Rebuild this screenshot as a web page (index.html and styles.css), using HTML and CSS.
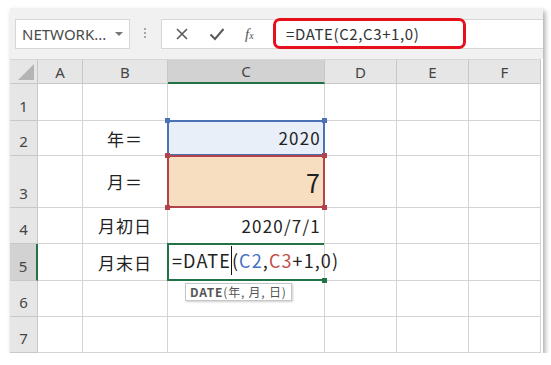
FILE: index.html
```html
<!DOCTYPE html>
<html lang="ja">
<head>
    <meta charset="UTF-8">
    <title>DATE</title>
    <link rel="stylesheet" href="styles.css">
</head>
<body>
<div class="window">
    <div class="toolbar">
        <div class="namebox">
            <span>NETWORK...</span>
            <span class="caret"></span>
        </div>
        <div class="grip"></div>
        <div class="fbar">
            <div class="fbtns">
                <svg width="14" height="14" viewBox="0 0 14 14"><path d="M2 2 L12 12 M12 2 L2 12" stroke="#5a5a5a" stroke-width="1.6" fill="none"/></svg>
                <svg width="16" height="14" viewBox="0 0 16 14"><path d="M1.5 7.5 L6 12 L14.5 2" stroke="#5a5a5a" stroke-width="2" fill="none"/></svg>
                <span class="fx">f<small>x</small></span>
            </div>
            <div class="finput">
                <div class="fhl">=DATE(C2,C3+1,0)</div>
            </div>
        </div>
    </div>

    <div class="sheet">
        <!-- header row -->
        <div class="hd corner"><span class="tri"></span></div>
        <div class="hd">A</div>
        <div class="hd">B</div>
        <div class="hd sel-col">C</div>
        <div class="hd">D</div>
        <div class="hd">E</div>
        <div class="hd">F</div>

        <!-- row 1 -->
        <div class="rh">1</div>
        <div class="c"></div><div class="c"></div><div class="c"></div>
        <div class="c"></div><div class="c"></div><div class="c"></div>

        <!-- row 2 -->
        <div class="rh">2</div>
        <div class="c"></div>
        <div class="c lbl">年＝</div>
        <div class="c num ref-blue">2020<i class="h tl"></i><i class="h tr"></i></div>
        <div class="c"></div><div class="c"></div><div class="c"></div>

        <!-- row 3 -->
        <div class="rh">3</div>
        <div class="c"></div>
        <div class="c lbl">月＝</div>
        <div class="c num big ref-red">7<i class="h tl"></i><i class="h tr"></i><i class="h bl"></i><i class="h br"></i></div>
        <div class="c"></div><div class="c"></div><div class="c"></div>

        <!-- row 4 -->
        <div class="rh">4</div>
        <div class="c"></div>
        <div class="c lbl">月初日</div>
        <div class="c num">2020/7/1</div>
        <div class="c"></div><div class="c"></div><div class="c"></div>

        <!-- row 5 -->
        <div class="rh sel-row">5</div>
        <div class="c"></div>
        <div class="c lbl">月末日</div>
        <div class="c edit">
            <span class="ftext">=DATE<span class="cursor"></span>(<span class="r-blue">C2</span>,<span class="r-red">C3</span>+1,0)</span>
            <i class="fill"></i>
            <div class="tip"><b>DATE</b>(年, 月, 日)</div>
        </div>
        <div class="c"></div><div class="c"></div><div class="c"></div>

        <!-- row 6 -->
        <div class="rh">6</div>
        <div class="c"></div><div class="c"></div><div class="c"></div>
        <div class="c"></div><div class="c"></div><div class="c"></div>

        <!-- row 7 -->
        <div class="rh">7</div>
        <div class="c"></div><div class="c"></div><div class="c"></div>
        <div class="c"></div><div class="c"></div><div class="c"></div>
    </div>
</div>
</body>
</html>
```

FILE: styles.css
```css
body {
    margin: 0;
    background: #fff;
    font-family: "Noto Sans CJK JP", "Noto Sans", sans-serif;
    color: #222;
}
.window {
    margin: 8px 0 0 10px;
    width: 533px;
    height: 345px;
    background: #fff;
    box-shadow: 2px 3px 5px rgba(0, 0, 0, 0.35);
    overflow: hidden;
}

/* toolbar */
.toolbar {
    height: 51px;
    background: #f1f1f1;
    display: flex;
    align-items: flex-start;
    padding: 11px 0 0 5px;
    box-sizing: border-box;
}
.namebox {
    width: 115px;
    height: 30px;
    box-sizing: border-box;
    background: #fff;
    border: 1px solid #d6d6d6;
    display: flex;
    align-items: center;
    justify-content: space-between;
    padding: 0 6px 0 6px;
    font-family: "Noto Sans", sans-serif;
    font-size: 15px;
    color: #4a4a4a;
}
.caret {
    width: 0;
    height: 0;
    border-left: 4px solid transparent;
    border-right: 4px solid transparent;
    border-top: 4px solid #777;
}
.grip {
    width: 2px;
    height: 12px;
    margin: 9px 15px 0 14px;
    background: repeating-linear-gradient(#a8a8a8 0 2px, transparent 2px 4px);
}
.fbar {
    flex: 1;
    display: flex;
    height: 30px;
    box-sizing: border-box;
    background: #fff;
    border: 1px solid #d6d6d6;
    border-right: none;
}
.fbtns {
    width: 108px;
    display: flex;
    align-items: center;
    gap: 20px;
    padding-left: 13px;
    box-sizing: border-box;
}
.fx {
    font-family: "Liberation Serif", serif;
    font-style: italic;
    font-size: 15px;
    color: #555;
}
.fx small {
    font-size: 10px;
}
.finput {
    flex: 1;
    position: relative;
}
.fhl {
    position: absolute;
    left: 3px;
    top: -2px;
    width: 193px;
    height: 31px;
    box-sizing: border-box;
    border: 3px solid #e5101b;
    border-radius: 7px;
    padding-left: 10px;
    font-size: 15px;
    letter-spacing: 0.6px;
    line-height: 25px;
    color: #333;
}

/* sheet */
.sheet {
    display: grid;
    grid-template-columns: 28px 45px 85px 157px 72px 72px 72px;
    grid-template-rows: 25px 37px 35px 52px 36px 37px 36px 36px;
    font-size: 17px;
}
.hd, .rh {
    background: #e6e6e6;
    color: #444;
    font-family: "Noto Sans", sans-serif;
    font-size: 15px;
    border-right: 1px solid #c8c8c8;
    border-bottom: 1px solid #c8c8c8;
    box-sizing: border-box;
    display: flex;
    justify-content: center;
}
.hd {
    align-items: center;
    border-top: 1px solid #d8d8d8;
}
.rh {
    align-items: flex-end;
    padding-bottom: 4px;
}
.corner {
    position: relative;
}
.tri {
    position: absolute;
    right: 3px;
    bottom: 3px;
    width: 0;
    height: 0;
    border-left: 16px solid transparent;
    border-bottom: 16px solid #b4b4b4;
}
.sel-col {
    background: #d2d2d2;
    border-bottom: 2px solid #217346;
}
.sel-row {
    background: #d2d2d2;
    border-right: 2px solid #217346;
}
.c {
    border-right: 1px solid #d4d4d4;
    border-bottom: 1px solid #d4d4d4;
    box-sizing: border-box;
    position: relative;
    display: flex;
    align-items: flex-end;
    padding: 0 4px 5px;
    white-space: nowrap;
}
.lbl {
    justify-content: center;
    align-items: center;
    padding-bottom: 0;
    letter-spacing: 1px;
}
.num {
    justify-content: flex-end;
    letter-spacing: 1.2px;
    padding-right: 3px;
}
.big {
    font-size: 25px;
    padding-bottom: 7px;
}
.ref-blue {
    background: #e9eff9;
}
.ref-red {
    background: #f8dec0;
}
.ref-blue::after, .ref-red::after, .edit::after {
    content: "";
    position: absolute;
    left: -1px;
    top: -1px;
    right: -1px;
    bottom: -1px;
    border: 2px solid #4a72b4;
    pointer-events: none;
}
.ref-red::after {
    border-color: #b2424b;
}
.edit::after {
    border-color: #217346;
    border-right: none;
    right: 0;
}
.h {
    position: absolute;
    width: 5px;
    height: 5px;
    background: #4a72b4;
    z-index: 2;
}
.ref-red .h {
    background: #b2424b;
}
.tl { left: -3px; top: -3px; }
.tr { right: -3px; top: -3px; }
.bl { left: -3px; bottom: -3px; }
.br { right: -3px; bottom: -3px; }

/* edited cell */
.edit {
    overflow: visible;
    z-index: 3;
    padding-left: 4px;
    background: #fff;
}
.ftext {
    font-size: 18px;
    letter-spacing: 1.1px;
    color: #222;
}
.r-blue { color: #4a72c4; }
.r-red { color: #c0504d; }
.cursor {
    display: inline-block;
    width: 1px;
    height: 29px;
    background: #111;
    vertical-align: -7px;
}
.fill {
    position: absolute;
    right: -3px;
    bottom: -3px;
    width: 5px;
    height: 5px;
    background: #217346;
    z-index: 2;
}
.tip {
    position: absolute;
    left: 17px;
    top: 39px;
    padding: 0 4px;
    height: 18px;
    box-sizing: border-box;
    background: #fff;
    border: 1px solid #c6c6c6;
    box-shadow: 1px 1px 2px rgba(0, 0, 0, 0.2);
    font-size: 12px;
    letter-spacing: 0.8px;
    line-height: 16px;
    color: #555;
}
.tip b {
    color: #555;
}
```
